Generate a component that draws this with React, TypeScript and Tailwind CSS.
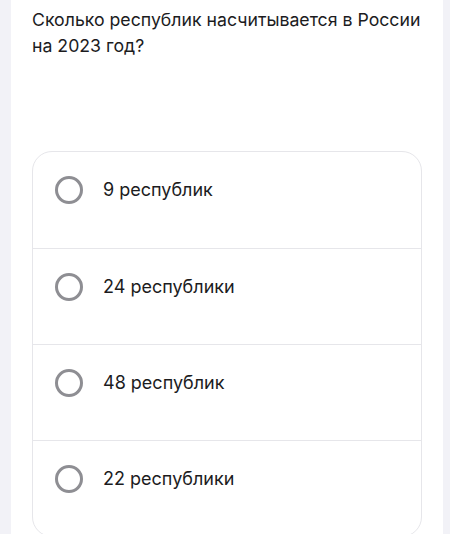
import React from "react";

const options = ["9 республик", "24 республики", "48 республик", "22 республики"];

export default function App() {
  return (
    <div className="w-[450px] h-[534px] overflow-hidden bg-[#f2f2f7] flex" style={{ fontFamily: "Inter, 'Noto Sans', sans-serif" }}>
      <div className="ml-[11px] w-[432px] h-full bg-white flex flex-col">
        <div className="pl-[21px] pr-[10px] pt-[7px] text-[17.7px] leading-[26px] text-[#1c1c1e]">
          Сколько республик насчитывается в России на 2023 год?
        </div>
        <div className="ml-[21px] mt-[92px] w-[390px] border border-[#e6e6ea] rounded-[20px] flex flex-col shrink-0">
          {options.map((o, i) => (
            <div
              key={o}
              className={`h-[96px] flex items-start pt-[24px] pl-[22px] gap-[20px] ${i > 0 ? "border-t border-[#e6e6ea]" : ""}`}
            >
              <div className="w-[28px] h-[28px] rounded-full border-[3px] border-[#8e8e93] shrink-0" />
              <div className="text-[18px] leading-[28px] text-[#1c1c1e]">{o}</div>
            </div>
          ))}
        </div>
      </div>
    </div>
  );
}
